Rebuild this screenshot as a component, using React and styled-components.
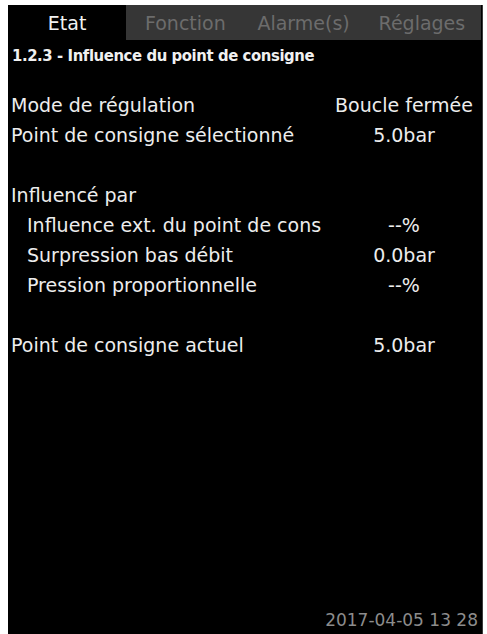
import React from "react";
import styled, { createGlobalStyle } from "styled-components";

const Global = createGlobalStyle`
  html, body { margin: 0; padding: 0; background: #ffffff; }
  body { font-family: "DejaVu Sans", "Liberation Sans", sans-serif; }
`;

const Page = styled.div`
  width: 487px;
  height: 634px;
  padding: 5px 4px 0 8px;
  box-sizing: border-box;
  background: #ffffff;
  overflow: hidden;
`;

const Screen = styled.div`
  width: 475px;
  height: 629px;
  background: #000000;
  display: flex;
  flex-direction: column;
  border-right: 1px solid #3a3a3a;
  box-sizing: border-box;
`;

const TabBar = styled.div`
  display: flex;
  height: 35px;
  background: #363636;
  margin-right: 1px;
`;

const Tab = styled.div`
  flex: 1;
  display: flex;
  align-items: center;
  justify-content: center;
  font-size: 19px;
  background: ${(p) => (p.$active ? "#000000" : "transparent")};
  color: ${(p) => (p.$active ? "#f2f2f2" : "#6c6c6c")};
  padding-top: 1px;
`;

const Subtitle = styled.div`
  font-family: "DejaVu Sans Condensed", "DejaVu Sans", sans-serif;
  font-weight: bold;
  font-size: 16.5px;
  color: #f0f0f0;
  height: 32px;
  line-height: 32px;
  padding-left: 4px;
  letter-spacing: -0.4px;
`;

const Content = styled.div`
  flex: 1;
  display: flex;
  flex-direction: column;
  padding-top: 18px;
`;

const Row = styled.div`
  display: flex;
  align-items: center;
  height: 30px;
  font-size: 19px;
  color: #ededed;
  padding-left: ${(p) => (p.$indent ? "19px" : "3px")};
`;

const Label = styled.div`
  flex: 1;
  white-space: nowrap;
`;

const Value = styled.div`
  width: 156px;
  text-align: center;
  white-space: nowrap;
`;

const Spacer = styled.div`
  height: 30px;
`;

const Footer = styled.div`
  font-size: 17px;
  color: #8c8c8c;
  text-align: right;
  height: 20px;
  line-height: 20px;
  padding: 0 4px 4px 0;
`;

const tabs = ["Etat", "Fonction", "Alarme(s)", "Réglages"];

const rows = [
  { label: "Mode de régulation", value: "Boucle fermée" },
  { label: "Point de consigne sélectionné", value: "5.0bar" },
  null,
  { label: "Influencé par", value: "" },
  { label: "Influence ext. du point de cons", value: "--%", indent: true },
  { label: "Surpression bas débit", value: "0.0bar", indent: true },
  { label: "Pression proportionnelle", value: "--%", indent: true },
  null,
  { label: "Point de consigne actuel", value: "5.0bar" },
];

export default function App() {
  return (
    <>
      <Global />
      <Page>
        <Screen>
          <TabBar>
            {tabs.map((t, i) => (
              <Tab key={t} $active={i === 0}>
                {t}
              </Tab>
            ))}
          </TabBar>
          <Subtitle>1.2.3 - Influence du point de consigne</Subtitle>
          <Content>
            {rows.map((r, i) =>
              r ? (
                <Row key={i} $indent={r.indent}>
                  <Label>{r.label}</Label>
                  <Value>{r.value}</Value>
                </Row>
              ) : (
                <Spacer key={i} />
              )
            )}
          </Content>
          <Footer>2017-04-05 13 28</Footer>
        </Screen>
      </Page>
    </>
  );
}
